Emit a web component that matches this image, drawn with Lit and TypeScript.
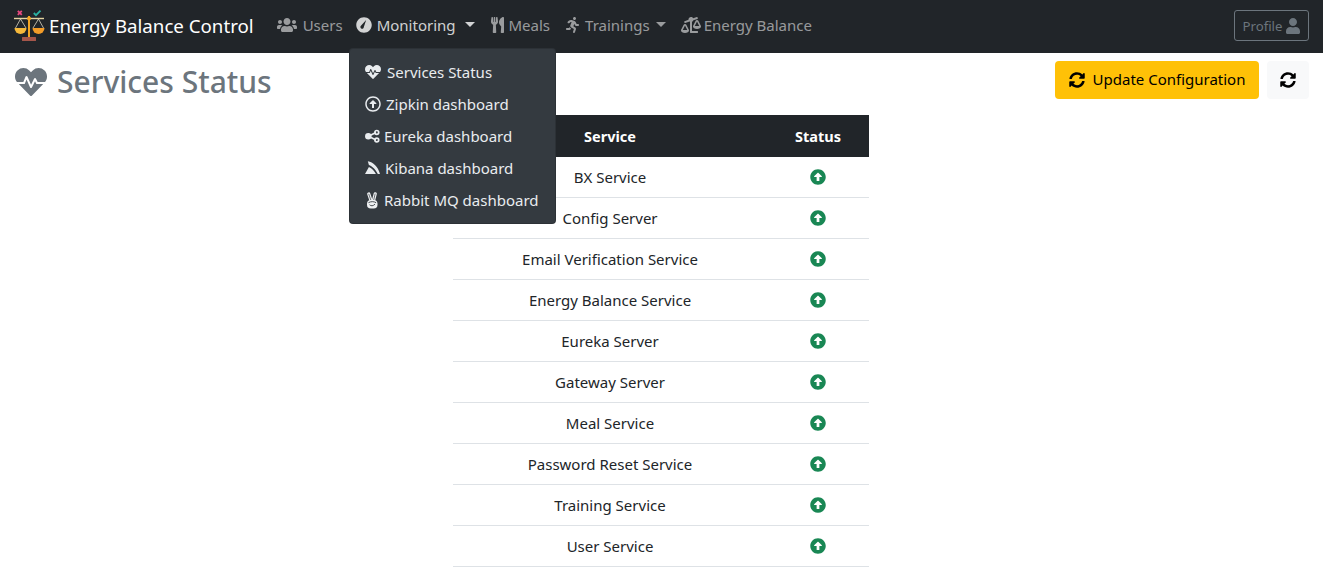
import { LitElement, html, css, svg } from "lit";
import { customElement } from "lit/decorators.js";

const ICONS: Record<string, [number, string]> = {
  users: [640, "M96 224c35.3 0 64-28.7 64-64s-28.7-64-64-64-64 28.7-64 64 28.7 64 64 64zm448 0c35.3 0 64-28.7 64-64s-28.7-64-64-64-64 28.7-64 64 28.7 64 64 64zm32 32h-64c-17.6 0-33.5 7.1-45.1 18.6 40.3 22.1 68.9 62 75.1 109.4h66c17.7 0 32-14.3 32-32v-32c0-35.3-28.7-64-64-64zm-256 0c61.9 0 112-50.1 112-112S381.9 32 320 32 208 82.1 208 144s50.1 112 112 112zm76.8 32h-8.3c-20.8 10-43.9 16-68.5 16s-47.6-6-68.5-16h-8.3C179.6 288 128 339.6 128 403.2V432c0 26.5 21.5 48 48 48h288c26.5 0 48-21.5 48-48v-28.8c0-63.6-51.6-115.2-115.2-115.2zm-223.7-13.4C161.5 263.1 145.6 256 128 256H64c-35.3 0-64 28.7-64 64v32c0 17.7 14.3 32 32 32h65.9c6.3-47.4 34.9-87.3 75.2-109.4z"],
  user: [448, "M224 256c70.7 0 128-57.3 128-128S294.7 0 224 0 96 57.3 96 128s57.3 128 128 128zm89.6 32h-16.7c-22.2 10.2-46.9 16-72.9 16s-50.6-5.8-72.9-16h-16.7C60.2 288 0 348.2 0 422.4V464c0 26.5 21.5 48 48 48h352c26.5 0 48-21.5 48-48v-41.6c0-74.2-60.2-134.4-134.4-134.4z"],
  sync: [512, "M370.72 133.28C339.458 104.008 298.888 87.962 255.848 88c-77.458.068-144.328 53.178-162.791 126.85-1.344 5.363-6.122 9.15-11.651 9.15H24.103c-7.498 0-13.194-6.807-11.807-14.176C33.933 94.924 134.813 8 256 8c66.448 0 126.791 26.136 171.315 68.685L463.03 40.97C478.149 25.851 504 36.559 504 57.941V192c0 13.255-10.745 24-24 24H345.941c-21.382 0-32.09-25.851-16.971-40.971l41.75-41.749zM32 296h134.059c21.382 0 32.09 25.851 16.971 40.971l-41.75 41.75c31.262 29.273 71.835 45.319 114.876 45.28 77.418-.07 144.315-53.144 162.787-126.849 1.344-5.363 6.122-9.15 11.651-9.15h57.304c7.498 0 13.194 6.807 11.807 14.176C478.067 417.076 377.187 504 256 504c-66.448 0-126.791-26.136-171.315-68.685L48.97 471.03C33.851 486.149 8 475.441 8 454.059V320c0-13.255 10.745-24 24-24z"],
  up: [512, "M8 256C8 119 119 8 256 8s248 111 248 248-111 248-248 248S8 393 8 256zm292 116V256h70.9c10.7 0 16.1-13 8.5-20.5L264.5 121.2c-4.7-4.7-12.2-4.7-16.9 0l-115 114.3c-7.6 7.6-2.2 20.5 8.5 20.5H212v116c0 6.6 5.4 12 12 12h64c6.6 0 12-5.4 12-12z"],
  upOutline: [512, "M256 504c137 0 248-111 248-248S393 8 256 8 8 119 8 256s111 248 248 248zm0-448c110.5 0 200 89.5 200 200s-89.5 200-200 200S56 366.5 56 256 145.5 56 256 56zm20 328h-40c-6.6 0-12-5.4-12-12V256h-67c-10.7 0-16-12.9-8.5-20.5l99-99c4.7-4.7 12.3-4.7 17 0l99 99c7.6 7.6 2.2 20.5-8.5 20.5h-67v116c0 6.6-5.4 12-12 12z"],
  heartbeat: [512, "M320.2 243.8l-49.7 99.4c-6 12.1-23.4 11.7-28.9-.6l-56.9-126.3-30 71.7H60.6l182.5 186.5c7.1 7.3 18.6 7.3 25.7 0L451.4 288H342.3l-22.1-44.2zM473.7 73.9l-2.4-2.5c-51.5-52.6-135.8-52.6-187.4 0L256 100l-27.9-28.5c-51.5-52.7-135.9-52.7-187.4 0l-2.4 2.4C-10.4 123.7-12.5 203 31 256h102.4l35.9-86.2c5.4-12.9 23.6-13.2 29.4-.4l58.2 129.3 49-97.9c5.9-11.8 22.7-11.8 28.6 0l27.6 55.2H481c43.5-53 41.4-132.3-7.3-182.1z"],
  running: [416, "M272 96c26.51 0 48-21.49 48-48S298.51 0 272 0s-48 21.49-48 48 21.49 48 48 48zM113.69 317.47l-14.8 34.52H32c-17.67 0-32 14.33-32 32s14.33 32 32 32h77.45c19.25 0 36.58-11.44 44.11-29.09l8.79-20.52-10.67-6.3c-17.32-10.23-30.06-25.37-37.99-42.61zM384 223.99h-44.03l-26.06-53.25c-12.5-25.55-35.45-44.23-61.78-50.94l-71.08-21.14c-28.3-6.8-57.77-.55-80.84 17.14l-39.67 30.41c-14.03 10.75-16.69 30.83-5.92 44.86s30.84 16.66 44.86 5.92l39.69-30.41c7.67-5.89 17.44-8 25.27-6.14l14.7 4.37-37.46 87.39c-12.62 29.48-1.31 64.01 26.3 80.31l84.98 50.17-27.47 87.73c-5.28 16.86 4.11 34.81 20.97 40.09 3.19 1 6.41 1.48 9.58 1.48 13.61 0 26.23-8.77 30.52-22.45l31.64-101.06c5.91-20.77-2.89-43.08-21.64-54.39l-61.24-36.14 31.31-78.28 20.27 41.43c8 16.34 24.92 26.89 43.11 26.89H384c17.67 0 32-14.33 32-32s-14.33-31.99-32-31.99z"],
  utensils: [416, "M207.9 15.2c.8 4.7 16.1 94.5 16.1 128.8 0 52.3-27.8 89.6-68.9 104.6L168 486.7c.7 13.7-10.2 25.3-24 25.3H80c-13.7 0-24.7-11.5-24-25.3l12.9-238.1C27.7 233.6 0 196.2 0 144 0 109.6 15.3 19.9 16.1 15.2 19.3-5.1 61.4-5.4 64 16.3v141.2c1.3 3.4 15.1 3.2 16 0 1.4-25.3 7.9-139.2 8-141.8 3.3-20.8 44.7-20.8 47.9 0 .2 2.7 6.6 116.5 8 141.8.9 3.2 14.8 3.4 16 0V16.3c2.6-21.6 44.8-21.4 48-1.1zm119.2 285.7l-15 185.1c-1.2 14 9.9 26 23.9 26h56c13.3 0 24-10.7 24-24V24c0-13.2-10.7-24-24-24-82.5 0-221.4 178.5-64.9 300.9z"],
  scale: [640, "M528 448H352V153.25c20.42-8.94 36.1-26.22 43.38-47.47l132-44.26c8.38-2.81 12.89-11.88 10.08-20.26l-10.17-30.34C524.48 2.54 515.41-1.97 507.03.84L389.11 40.37C375.3 16.36 349.69 0 320 0c-44.18 0-80 35.82-80 80 0 3.43.59 6.71 1.01 10.03l-128.39 43.05c-8.38 2.81-12.89 11.88-10.08 20.26l10.17 30.34c2.81 8.38 11.88 12.89 20.26 10.08l142.05-47.63c4.07 2.77 8.43 5.12 12.99 7.12V496c0 8.84 7.16 16 16 16h224c8.84 0 16-7.16 16-16v-32c-.01-8.84-7.17-16-16.01-16zm111.98-144c0-16.18 1.34-8.73-85.05-181.51-17.65-35.29-68.19-35.36-85.87 0-87.12 174.26-85.04 165.84-85.04 181.51H384c0 44.18 57.31 80 128 80s128-35.82 128-80h-.02zM440 288l72-144 72 144H440zm-269.07-37.51c-17.65-35.29-68.19-35.36-85.87 0C-2.06 424.75.02 416.33.02 432H0c0 44.18 57.31 80 128 80s128-35.82 128-80h-.02c0-16.18 1.34-8.73-85.05-181.51zM56 416l72-144 72 144H56z"],
  gauge: [512, "M256 8C119 8 8 119 8 256s111 248 248 248 248-111 248-248S393 8 256 8zM325 95L250 320A55 55 0 1 1 150 290z"],
  kibana: [480, "M90 40C260 60 420 220 480 450L410 450C350 310 225 190 125 160zM0 450L125 225C225 275 305 360 350 450z"],
};

const icon = (name: string, size: number, color = "currentColor") => {
  const [w, d] = ICONS[name];
  return html`<svg class="ic" width=${(size * w) / 512} height=${size} viewBox="0 0 ${w} 512" fill=${color}>${svg`<path fill-rule="evenodd" d=${d}></path>`}</svg>`;
};

const eurekaIcon = html`<svg class="ic" width="15" height="16" viewBox="0 0 15 16" fill="none" stroke="currentColor" stroke-width="1.7">
  <path d="M3.500 8.300L11 4.500M3.500 8.300L11 12"></path>
  <circle cx="3.300" cy="8.300" r="2.400" fill="currentColor"></circle>
  <circle cx="11.800" cy="4.400" r="1.900"></circle>
  <circle cx="11.800" cy="12" r="1.900"></circle>
</svg>`;

const peaceIcon = html`<svg class="ic" width="15" height="17" viewBox="0 0 15 17" fill="none" stroke-linecap="round">
  <path d="M3.800 2L6 8.500M10.200 1.800L8.500 8.500" stroke="#eef0f2" stroke-width="3.200"></path>
  <path d="M3.800 2.200L5.800 8M10.100 2L8.700 8" stroke="#343a40" stroke-width="0.700"></path>
  <rect x="2" y="8" width="10.500" height="8.500" rx="3.800" fill="#eef0f2"></rect>
  <path d="M3.800 10.500c2-1.200 5-1.200 7 0M4.800 13c1.200 1.200 3.200 1.200 5-.6" stroke="#343a40" stroke-width="0.900"></path>
</svg>`;

const logo = html`<svg class="ic logo" width="32" height="32" viewBox="0 0 32 32" fill="none">
  <path d="M16 6v21" stroke="#f5a623" stroke-width="2"></path>
  <rect x="9" y="27" width="14" height="4" rx="0.500" fill="#a5564a"></rect>
  <path d="M1 8.500h30" stroke="#e3d3a0" stroke-width="1.400"></path>
  <circle cx="16" cy="8.500" r="2" fill="#f5a623"></circle>
  <path d="M7.500 9L2.500 18M7.500 9l5.500 9M25.500 9l-5.500 9M25.500 9l5 9" stroke="#d9d4c2" stroke-width="0.800"></path>
  <path d="M1.500 18h12a6 6 0 0 1-12 0z" fill="#f6b93b"></path>
  <path d="M19.500 18h12a6 6 0 0 1-12 0z" fill="#f39c28"></path>
  <path d="M4.800 .8l4 4M8.800 .8l-4 4" stroke="#e8487f" stroke-width="1.800"></path>
  <path d="M20.800 3l2.200 2.200 4.500-4.500" stroke="#2bb3a3" stroke-width="1.800"></path>
</svg>`;

const services = [
  "BX Service",
  "Config Server",
  "Email Verification Service",
  "Energy Balance Service",
  "Eureka Server",
  "Gateway Server",
  "Meal Service",
  "Password Reset Service",
  "Training Service",
  "User Service",
];

const menu = [
  { glyph: icon("heartbeat", 16), label: "Services Status", cls: "m0" },
  { glyph: icon("upOutline", 16), label: "Zipkin dashboard", cls: "m1" },
  { glyph: eurekaIcon, label: "Eureka dashboard", cls: "m2" },
  { glyph: icon("kibana", 16), label: "Kibana dashboard", cls: "m1" },
  { glyph: peaceIcon, label: "Rabbit MQ dashboard", cls: "m2" },
];

@customElement("app-root")
export class AppRoot extends LitElement {
  static styles = css`
    :host {
      display: block;
      font-family: "Noto Sans", "Open Sans", sans-serif;
      font-size: 15px;
      color: #212529;
      background: #fff;
      min-height: 582px;
      overflow: hidden;
    }
    .ic {
      display: inline-block;
      flex: none;
    }
    nav {
      height: 53px;
      background: #212529;
      display: flex;
      align-items: center;
      padding: 0 14px 4px 13px;
      box-sizing: border-box;
    }
    .brand {
      display: flex;
      align-items: center;
      gap: 4px;
      color: #fff;
      font-size: 18.7px;
      margin-right: 23px;
      white-space: nowrap;
    }
    .brand span {
      margin-top: 2px;
    }
    .logo {
      margin-top: 3px;
    }
    .link {
      display: flex;
      align-items: center;
      color: rgba(255, 255, 255, 0.55);
      white-space: nowrap;
    }
    .link.active {
      color: rgba(255, 255, 255, 0.8);
    }
    .users {
      gap: 6px;
      margin-right: 13px;
    }
    .monitoring {
      gap: 5px;
      margin-right: 16px;
    }
    .meals {
      gap: 5px;
      margin-right: 16px;
    }
    .trainings {
      gap: 6px;
      margin-right: 15px;
    }
    .balance {
      gap: 3px;
    }
    .caret {
      width: 0;
      height: 0;
      border-top: 5px solid currentColor;
      border-left: 5px solid transparent;
      border-right: 5px solid transparent;
    }
    .monitoring .caret {
      margin-left: 4px;
    }
    .spacer {
      flex: 1;
    }
    .profile {
      display: flex;
      align-items: center;
      justify-content: center;
      gap: 4px;
      width: 75px;
      height: 31px;
      margin-top: 2px;
      box-sizing: border-box;
      border: 1px solid #6c757d;
      border-radius: 3px;
      color: #6c757d;
      font-size: 13.2px;
    }
    .page {
      position: relative;
      padding: 8px 14px 0 15px;
    }
    .head {
      display: flex;
      justify-content: space-between;
      align-items: flex-start;
    }
    h2 {
      margin: 0;
      display: flex;
      align-items: center;
      gap: 10px;
      color: #6c757d;
      font-size: 30px;
      font-weight: 500;
      line-height: 42px;
    }
    .actions {
      display: flex;
      gap: 8px;
    }
    .btn {
      height: 38px;
      display: flex;
      align-items: center;
      justify-content: center;
      gap: 8px;
      border-radius: 4px;
      box-sizing: border-box;
      color: #000;
    }
    .btn span {
      margin-top: -2px;
    }
    .warn {
      width: 204px;
      background: #ffc107;
    }
    .light {
      width: 42px;
      background: #f8f9fa;
    }
    table {
      width: 416px;
      margin: 12px auto 0 438px;
      border-collapse: collapse;
      text-align: center;
    }
    th {
      height: 41px;
      padding: 0 0 1px;
      background: #212529;
      color: #fff;
      font-weight: 700;
      font-size: 14.5px;
    }
    td {
      height: 39px;
      padding: 0 0 1px;
      border-bottom: 1px solid #dee2e6;
    }
    .c1 {
      width: 314px;
    }
    td .ic {
      display: block;
      margin: 1px auto 0;
    }
    .dropdown {
      position: absolute;
      left: 349px;
      top: 48px;
      width: 207px;
      height: 176px;
      box-sizing: border-box;
      padding: 7px 0;
      background: #343a40;
      border: 1px solid rgba(0, 0, 0, 0.15);
      border-radius: 4px;
      color: #e9ecef;
    }
    .item {
      height: 32px;
      display: flex;
      align-items: center;
      padding-left: 15px;
      white-space: nowrap;
    }
    .m0 {
      gap: 6px;
    }
    .m1 {
      gap: 5px;
    }
    .m2 {
      gap: 4px;
    }
  `;

  render() {
    return html`
      <nav>
        <div class="brand">${logo}<span>Energy Balance Control</span></div>
        <div class="link users">${icon("users", 16)}Users</div>
        <div class="link active monitoring">${icon("gauge", 16)}Monitoring<i class="caret"></i></div>
        <div class="link meals">${icon("utensils", 16)}Meals</div>
        <div class="link trainings">${icon("running", 16)}Trainings<i class="caret"></i></div>
        <div class="link balance">${icon("scale", 16)}Energy Balance</div>
        <div class="spacer"></div>
        <div class="profile">Profile ${icon("user", 16)}</div>
      </nav>
      <div class="page">
        <div class="head">
          <h2>${icon("heartbeat", 32)}Services Status</h2>
          <div class="actions">
            <div class="btn warn">${icon("sync", 16)}<span>Update Configuration</span></div>
            <div class="btn light">${icon("sync", 16)}</div>
          </div>
        </div>
        <table>
          <thead>
            <tr><th class="c1">Service</th><th>Status</th></tr>
          </thead>
          <tbody>
            ${services.map(
              (s) => html`<tr><td class="c1">${s}</td><td>${icon("up", 16, "#198754")}</td></tr>`
            )}
          </tbody>
        </table>
      </div>
      <div class="dropdown">
        ${menu.map((m) => html`<div class="item ${m.cls}">${m.glyph}${m.label}</div>`)}
      </div>
    `;
  }
}
